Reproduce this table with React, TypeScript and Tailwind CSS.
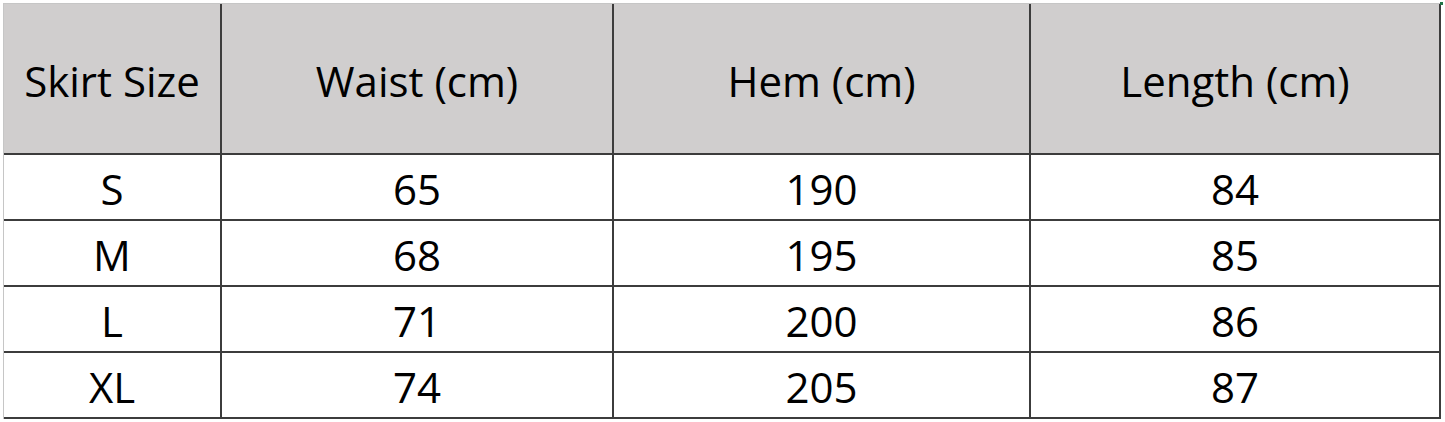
import React from "react";

const headers = ["Skirt Size", "Waist (cm)", "Hem (cm)", "Length (cm)"];
const rows = [
  ["S", "65", "190", "84"],
  ["M", "68", "195", "85"],
  ["L", "71", "200", "86"],
  ["XL", "74", "205", "87"],
];
const widths = ["w-[218px]", "w-[392px]", "w-[417px]", "w-[410px]"];

export default function App() {
  return (
    <div
      className="w-[1445px] h-[422px] bg-white overflow-hidden relative"
      style={{ fontFamily: '"Open Sans", "Noto Sans", sans-serif' }}
    >
      <div className="h-[3px] bg-white" />
      <div className="flex">
        <div className="w-[3px] bg-white" />
        <div className="flex flex-col border-t border-l border-[#c6c6c6]">
          <div className="flex h-[151px] bg-[#d0cece] border-b-2 border-[#3c3c3c]">
            {headers.map((h, i) => (
              <div
                key={h}
                className={`${widths[i]} flex items-center justify-center pt-[4px] border-r-2 border-[#3c3c3c] text-[42px] text-black`}
              >
                {h}
              </div>
            ))}
          </div>
          {rows.map((r, ri) => (
            <div key={ri} className="flex h-[66px] border-b-2 border-[#3c3c3c]">
              {r.map((c, i) => (
                <div
                  key={i}
                  className={`${widths[i]} flex items-center justify-center pt-[2px] border-r-2 border-[#3c3c3c] text-[42px] text-black`}
                >
                  {c}
                </div>
              ))}
            </div>
          ))}
        </div>
      </div>
      <div className="absolute right-[2px] top-[2px] w-[3px] h-[3px] bg-[#217346]" />
    </div>
  );
}
